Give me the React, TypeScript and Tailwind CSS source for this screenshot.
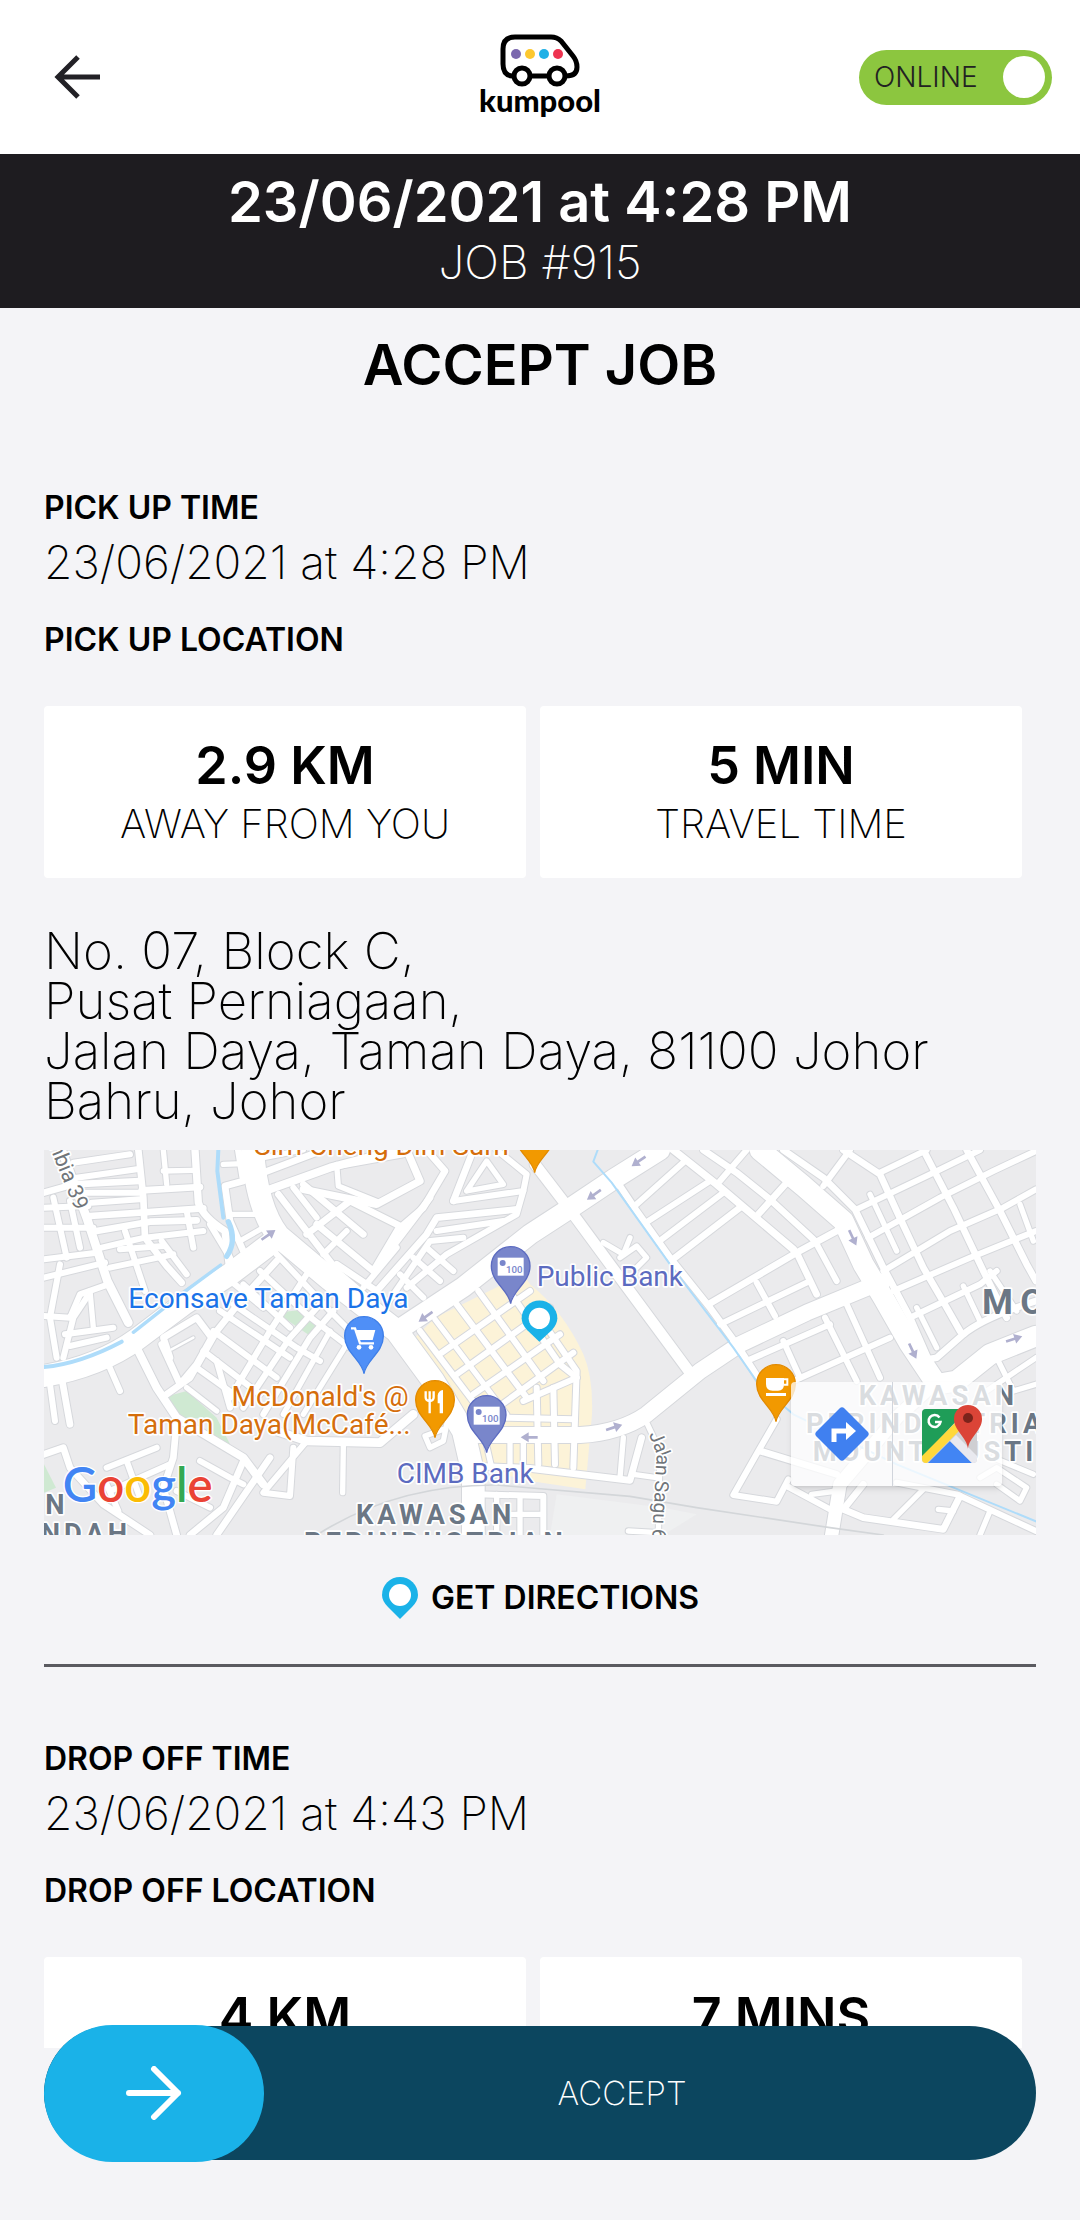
import React, { useState } from "react";

type Road = [width: number, path: string];

const WATER: Road[] = [
  [12, "M42 708Q150 698 275 632"],
  [10, "M310 604L480 470L572 402"],
  [12, "M565 57L562 120Q572 200 580 260"],
  [16, "M595 272Q622 330 590 376"],
  [6, "M1703 57L1690 92L1745 155L1920 400L2110 650L2190 765L2290 850L2600 1000L3020 1172"],
];

const ROADS: Road[] = [
  // north-west grid
  [26, "M95 57L170 260L232 450L295 575"],
  [20, "M325 57L340 200L345 320L410 405L455 455"],
  [16, "M400 57L410 160"],
  [22, "M495 57L505 215Q520 260 585 300L600 420"],
  [16, "M400 120L490 118"],
  [18, "M130 95L300 70"],
  [18, "M140 140L320 115"],
  [20, "M42 185L130 160L330 150"],
  [20, "M335 178L510 168"],
  [18, "M165 185L330 185"],
  [20, "M180 255L520 232"],
  [18, "M185 215L330 205"],
  [20, "M200 300L360 272L500 268"],
  [18, "M345 320L520 300"],
  [18, "M215 350L300 330L345 320"],
  [18, "M270 355L400 345"],
  [18, "M285 300L345 480"],
  [18, "M240 410L430 370"],
  [18, "M470 240L490 350"],
  [18, "M395 330L470 430"],
  [18, "M540 280L600 380"],
  [20, "M625 57L640 150L585 165L600 270L640 360"],
  [16, "M580 100L640 98"],
  [16, "M600 250L690 250"],
  [16, "M630 330L700 290"],
  [18, "M42 230L175 225"],
  [18, "M42 290L190 290"],
  [18, "M70 200L110 380"],
  [18, "M120 210L150 350"],
  [18, "M42 385L200 365"],
  [18, "M42 440L225 395"],
  [18, "M90 400L60 560L80 680"],
  [18, "M42 555L120 560L150 490L235 460"],
  [18, "M100 680L130 560L170 500"],
  [18, "M105 610L250 590"],
  [18, "M120 645L230 620"],
  [16, "M180 480L190 590"],
  // south of the canal
  [24, "M320 650L380 770L440 860L640 980L700 1060"],
  [20, "M395 640L450 760L500 700L545 620L500 560L400 620L420 680"],
  [8, "M425 655L490 620"],
  [18, "M235 700L270 780"],
  [18, "M60 760L75 870"],
  [20, "M95 740L120 880"],
  [20, "M410 790L480 740L560 600L640 500L740 390"],
  [18, "M500 710L640 810"],
  [18, "M520 660L690 790"],
  [18, "M550 600L740 740"],
  [18, "M570 540L780 680"],
  [18, "M610 520L800 650L870 690"],
  [18, "M560 690L600 830"],
  [18, "M600 800L720 600L830 430"],
  [18, "M640 830L780 620L870 520"],
  [18, "M700 850L840 620L910 540"],
  [16, "M760 850L900 600"],
  [16, "M820 850L950 640"],
  [18, "M640 460L780 590"],
  [18, "M690 420L830 550L960 650"],
  [18, "M740 370L900 540L960 600"],
  [18, "M590 440L700 530"],
  [16, "M470 770L560 840"],
  [26, "M740 900L830 930L1050 935L1150 850"],
  [18, "M830 930L700 1085L780 1095L790 950"],
  [16, "M940 945L938 1085"],
  [20, "M640 990L580 1130L480 1212"],
  [20, "M720 980L560 1212"],
  [20, "M440 870L430 980L400 1070L440 1212"],
  [18, "M230 1010L380 950"],
  [18, "M240 1080L420 1000"],
  [18, "M290 990L330 1100"],
  [18, "M230 1060L265 1140"],
  [18, "M510 990L600 1040L640 1060"],
  [18, "M440 1080L540 1130"],
  [20, "M42 970L100 950L120 1010L220 1120L360 1212"],
  [16, "M1250 880L1240 930L1200 950L1185 915L1240 895"],
  // north centre
  [20, "M700 125L880 57"],
  [24, "M720 175L900 110L1100 57"],
  [16, "M700 80L820 57"],
  [20, "M745 190L930 430L1060 540"],
  [18, "M790 170L860 260"],
  [20, "M820 160L1000 310"],
  [22, "M820 175L1040 220L1170 150L1130 57"],
  [16, "M920 100L925 165L1050 215"],
  [18, "M900 110L1120 70"],
  [20, "M830 310L960 210L1110 285L1030 420L860 280"],
  [20, "M1190 57L1245 120L1180 230L1110 290"],
  [20, "M1040 410L1200 200"],
  [20, "M920 400L1040 480L1190 310L1220 260L1460 235"],
  [18, "M880 370L950 300"],
  [18, "M1000 470L1100 350"],
  [18, "M1070 520L1200 330L1300 320"],
  [20, "M1270 210L1330 57"],
  [18, "M1270 210L1480 180L1490 130L1400 57"],
  [16, "M1310 180L1370 90L1420 160L1310 180"],
  [18, "M1220 300L1420 270"],
  [18, "M1130 470L1250 370L1460 250L1480 180"],
  [18, "M1150 380L1230 450"],
  [18, "M1190 350L1270 420"],
  [18, "M1110 430L1180 500"],
  // shop blocks
  [18, "M1170 600L1400 905"],
  [16, "M1215 565L1430 850"],
  [18, "M1280 520L1490 800"],
  [18, "M1345 480L1540 750"],
  [18, "M1410 440L1590 700L1640 740"],
  [18, "M1235 665L1500 480"],
  [18, "M1280 730L1560 530"],
  [18, "M1330 790L1590 610"],
  [18, "M1375 850L1630 665"],
  [18, "M1480 810L1640 740"],
  [18, "M1530 560L1640 720L1630 1010"],
  [18, "M1420 860L1630 865"],
  [18, "M1520 770L1525 1000"],
  [18, "M1570 770L1575 1000"],
  [16, "M1360 900L1385 1010"],
  [16, "M1440 930L1440 1010"],
  [16, "M1480 930L1480 1010"],
  [20, "M1330 1005L1500 1012L1800 1048L1835 920"],
  [16, "M1780 920L1770 1040"],
  [16, "M1810 1030L1880 1040"],
  [18, "M1340 1090L1540 1095L1540 1212"],
  [16, "M1400 1090L1400 1212"],
  [16, "M1470 1095L1470 1212"],
  [16, "M1400 1150L1540 1150"],
  // centre and east
  [32, "M1515 100L1615 230L1740 400L1980 725"],
  [20, "M1770 165L1820 240L1920 380L2040 530L2120 640L2200 765"],
  [16, "M1720 335L1780 370L1800 320"],
  [16, "M1770 380L1820 345L1850 380L1820 410"],
  [18, "M1820 220L1965 90"],
  [18, "M1855 270L2040 150"],
  [18, "M1895 325L2080 185"],
  [20, "M1935 380L2130 230"],
  [22, "M1930 57L2060 160L2290 355"],
  [20, "M2020 57L2120 125L2220 205L2350 325"],
  [18, "M2070 150L2150 57"],
  [20, "M2185 250L2270 155"],
  [20, "M2035 520L2300 365L2420 300"],
  [18, "M2070 580L2330 455"],
  [18, "M2180 455L2235 555"],
  [20, "M2300 365L2360 490"],
  [18, "M2355 330L2420 450"],
  [18, "M2380 165L2460 57"],
  [20, "M2260 57L2380 140L2475 235L2560 410L2640 560L2695 685L2720 680L2800 610Q2860 560 3018 510"],
  [20, "M2440 57L2550 130L2600 240L2680 410L2750 530L2790 600"],
  [18, "M2550 125L2690 57"],
  [18, "M2480 235L2700 130L2850 57"],
  [18, "M2515 320L2730 200L2890 120L3018 60"],
  [18, "M2560 420L2760 300L2920 230L3018 175"],
  [18, "M2590 480L2820 380L3018 300"],
  [18, "M2640 560L2850 460L2900 420"],
  [20, "M2680 57L2770 230L2860 420L2930 560"],
  [20, "M2810 57L2910 240L2990 400L3018 450"],
  [16, "M2520 190L2600 360"],
  [16, "M2970 220L3010 330"],
  [16, "M2800 465L2850 570"],
  [16, "M2660 530L2720 650"],
  [16, "M2880 420L2960 540"],
  [18, "M2385 560L2480 750"],
  [18, "M2450 520L2550 740"],
  [18, "M2150 690L2400 580"],
  [18, "M2290 750L2580 620"],
  [18, "M2260 630L2310 740"],
  [16, "M2900 680L2950 780L3018 760"],
  [16, "M2840 800L3018 680"],
  // south-east
  [18, "M2240 865L2185 960L2110 1092L2240 1112L2275 1045"],
  [20, "M2190 960L2420 1030"],
  [18, "M2270 1065L2400 1135"],
  [16, "M2345 1090L2420 1080"],
  [20, "M2500 1060L2440 1135L2500 1160L2740 1195L2790 1095"],
  [16, "M2590 1165L2680 1075"],
  [16, "M2725 1135L2770 1140"],
  [18, "M2600 1055L2780 1090L3018 1200"],
  [16, "M2850 1212L2880 1140"],
  [16, "M2900 1060L2970 1110L2990 1070L2900 1010L2850 1040"],
  [16, "M2890 980L3010 1030"],
  [16, "M1850 875L1890 960L1885 1212"],
  [16, "M1885 1205L1795 1200"],
  // arterials
  [40, "M2720 750L2600 860L2430 1060L2405 1212"],
  [66, "M42 735Q210 705 320 625L460 520L600 430L745 320"],
  [68, "M668 57Q680 230 745 315L900 445L1100 600L1210 750L1300 900L1330 1030L1330 1212"],
  [60, "M1100 600L1300 468L1500 310L1620 232L1750 145L1890 57"],
  [48, "M1330 912L1650 912Q1770 905 1850 850L2010 720L2130 640L2330 545L2560 450"],
  [62, "M2190 57L2320 165L2440 270L2500 400L2560 500L2640 640L2720 760L2780 750L2880 670L3018 615"],
];

const ARROWS = [
  [715, 312, -35],
  [1187, 557, 145],
  [1498, 919, 180],
  [1826, 91, 145],
  [1692, 191, 145],
  [1752, 889, -18],
  [2468, 320, 65],
  [2648, 660, 65],
  [2952, 624, -18],
];

function MapPin({ x, y, fill, edge, children }: { x: number; y: number; fill: string; edge: string; children?: React.ReactNode }) {
  return (
    <g transform={`translate(${x} ${y})`}>
      <path
        d="M0 113C-6 72-58 50-58 0A58 58 0 1 1 58 0C58 50 6 72 0 113Z"
        fill={fill}
        stroke={edge}
        strokeWidth={4}
      />
      {children}
    </g>
  );
}

function BankNote() {
  return (
    <>
      <rect x={-39} y={-25} width={78} height={54} fill="#fff" />
      <circle cx={-24} cy={-9} r={9} fill="#7986cb" />
      <text x={-14} y={20} fontSize={29} fontWeight={500} fill="#7986cb">100</text>
    </>
  );
}

function CityMap() {
  const halo = { stroke: "#fff", strokeWidth: 10, strokeLinejoin: "round" as const, paintOrder: "stroke" };
  return (
    <svg
      viewBox="42 57 2976 1155"
      preserveAspectRatio="xMidYMid slice"
      className="block h-full w-full"
      fontFamily="Roboto, sans-serif"
      role="img"
      aria-label="Map of the pick up location"
    >
      <rect x={42} y={57} width={2976} height={1155} fill="#ebebed" />
      <path d="M1580 1090L1900 1130L2000 1150L1900 1212H1560Z" fill="#eff0f1" />
      <path d="M1150 625L1215 560L1480 430L1500 460Q1600 540 1660 670Q1690 740 1686 850L1666 1075L1500 1050L1340 1010V900L1280 800Z" fill="#fcf3d8" />
      <path d="M740 545L830 535L866 580L842 616Z" fill="#cfe9d2" />
      <path d="M415 795L470 780L560 860L600 940L530 915L535 862L445 862Z" fill="#cfe9d2" />
      <path d="M42 1000L78 1070L42 1085Z" fill="#cfe9d2" />
      <g fill="none" strokeLinecap="round" strokeLinejoin="round">
        {ROADS.map(([w, d]) => <path key={d} d={d} stroke="#d6d8dc" strokeWidth={w + 6} />)}
        {ROADS.map(([w, d]) => <path key={d} d={d} stroke="#fff" strokeWidth={w} />)}
        {WATER.map(([w, d]) => <path key={d} d={d} stroke="#aedcfa" strokeWidth={w} />)}
        <path d="M860 1212Q1100 1060 1400 1062L1800 1096L2000 1130L2400 1190L2560 1212" stroke="#d3d6d9" strokeWidth={5} />
      </g>
      {ARROWS.map(([x, y, r]) => (
        <g key={`${x}-${y}`} transform={`translate(${x} ${y}) rotate(${r})`} fill="#b0b0cf">
          <path d="M-25-4H2V-15L26 0L2 15V4H-25Z" />
        </g>
      ))}

      <MapPin x={1514} y={12} fill="#f29900" edge="#e28a00" />
      <MapPin x={1442} y={405} fill="#7986cb" edge="#5c6bc0"><BankNote /></MapPin>
      <MapPin x={1370} y={852} fill="#7986cb" edge="#5c6bc0"><BankNote /></MapPin>
      <MapPin x={1002} y={615} fill="#4f8ff7" edge="#3f7fe8">
        <path d="M-39-23H-27L-12 22H30" fill="none" stroke="#fff" strokeWidth={7} />
        <path d="M-24-18H34L26 12H-14Z" fill="#fff" />
        <circle cx={-15} cy={34} r={7} fill="#fff" />
        <circle cx={21} cy={34} r={7} fill="#fff" />
      </MapPin>
      <MapPin x={1215} y={807} fill="#f29900" edge="#e28a00">
        <path d="M-28-26V-8Q-28 3-16 3Q-4 3-4-8V-26M-16-26V40" fill="none" stroke="#fff" strokeWidth={7} />
        <path d="M24-30V40H14V10H8V-14Q10-28 24-30Z" fill="#fff" />
      </MapPin>
      <MapPin x={2238} y={759} fill="#f29900" edge="#e28a00">
        <path d="M-30-18H24V0Q24 20 6 20H-10Q-30 20-30 0Z" fill="#fff" />
        <path d="M22-14H34V2H22" fill="none" stroke="#fff" strokeWidth={6} />
        <rect x={-30} y={27} width={60} height={9} fill="#fff" />
      </MapPin>
      <path d="M1528 632L1492 598Q1475 580 1475 562A53 53 0 1 1 1582 562Q1582 580 1565 598Z" fill="#1ab2e8" />
      <circle cx={1528} cy={562} r={32} fill="#fff" />

      <g {...halo} fontSize={84}>
        <text x={672} y={72} fill="#d56e0c">Sim Cheng Dim Sum</text>
        <text x={295} y={530} fill="#1a73e8">Econsave Taman Daya</text>
        <text x={1136} y={824} fill="#d56e0c" textAnchor="end">McDonald's @</text>
        <text x={1142} y={908} fill="#d56e0c" textAnchor="end">Taman Daya(McCafé...</text>
        <text x={1520} y={464} fill="#5c6bc0">Public Bank</text>
        <text x={1100} y={1055} fill="#5c6bc0">CIMB Bank</text>
      </g>
      <g {...halo} fontSize={58} fill="#70757a">
        <text transform="translate(58 46) rotate(68)" fontSize={64}>nbia 39</text>
        <text transform="translate(1856 910) rotate(68)">Jal</text>
        <text transform="translate(1880 970) rotate(93)">an Sagu 6</text>
      </g>
      <g {...halo} fontSize={82} fontWeight={700} letterSpacing={12} fill="#6b7785">
        <text x={978} y={1180}>KAWASAN</text>
        <text x={822} y={1264}>PERINDUSTRIAN</text>
        <text x={46} y={1150}>N</text>
        <text x={32} y={1236}>NDAH</text>
        <text x={2486} y={822}>KAWASAN</text>
        <text x={2328} y={906}>PERINDUSTRIAL</text>
        <text x={2348} y={991}>MOUNT AUSTIN</text>
        <text x={2856} y={549} fontSize={106} letterSpacing={22}>MO</text>
      </g>
      <text x={98} y={1112} fontFamily="Lato, sans-serif" fontSize={142} fontWeight={600} stroke="#fff" strokeWidth={8} paintOrder="stroke">
        <tspan fill="#4285f4">G</tspan>
        <tspan fill="#ea4335">o</tspan>
        <tspan fill="#fbbc05">o</tspan>
        <tspan fill="#4285f4">g</tspan>
        <tspan fill="#34a853">l</tspan>
        <tspan fill="#ea4335">e</tspan>
      </text>
    </svg>
  );
}

function DirectionsIcon() {
  return (
    <svg viewBox="0 0 54 54" className="size-[54px]" aria-hidden="true">
      <path d="M24.5 1.5Q27-1 29.5 1.5L52.500 24.500Q55 27 52.500 29.500L29.500 52.500Q27 55 24.500 52.500L1.500 29.500Q-1 27 1.500 24.500Z" fill="#4080f0" />
      <path d="M19 35V24H33" fill="none" stroke="#fff" strokeWidth={5} />
      <path d="M31 15L41 24L31 33Z" fill="#fff" />
    </svg>
  );
}

function MapsIcon() {
  return (
    <svg viewBox="0 0 60 60" className="size-[60px]" aria-hidden="true">
      <defs>
        <clipPath id="tile"><rect x={0} y={5} width={55} height={54} rx={4} /></clipPath>
      </defs>
      <g clipPath="url(#tile)">
        <rect width={60} height={60} fill="#cfcfd2" />
        <path d="M0 0H50L0 54Z" fill="#1f9d58" />
        <path d="M0 60V52L36 16L42 22L4 60Z" fill="#ffd83b" />
        <path d="M5 60L28 37L51 60Z" fill="#4285f4" />
        <path d="M28 37L34 31L60 57V60H51Z" fill="#e9e9ef" />
      </g>
      <path d="M17.500 13.500A6 6 0 1 0 18.500 18H13" fill="none" stroke="#fff" strokeWidth={2.500} />
      <path d="M46 45C45 33 32 27 32 15A14 14 0 1 1 60 15C60 27 47 33 46 45Z" fill="#db4437" />
      <circle cx={46} cy={14} r={5} fill="#7b231b" />
    </svg>
  );
}

function Logo() {
  return (
    <div className="flex flex-col items-center pb-1">
      <svg viewBox="0 0 80 54" className="h-[54px] w-20" aria-hidden="true">
        <path d="M12 42Q3 41 3 30V15Q3 3 15 3H51Q57 3 61 7L73 22Q77 27 77 33Q77 42 66 42Z" fill="#fff" stroke="#000" strokeWidth={5} />
        <circle cx={16} cy={20} r={5} fill="#7b68ae" />
        <circle cx={30} cy={20} r={5} fill="#fdc82f" />
        <circle cx={44} cy={20} r={5} fill="#1fb0e6" />
        <circle cx={58} cy={20} r={5} fill="#ee3350" />
        <circle cx={22} cy={42} r={8} fill="#fff" stroke="#000" strokeWidth={5} />
        <circle cx={57} cy={42} r={8} fill="#fff" stroke="#000" strokeWidth={5} />
      </svg>
      <span className="-mt-1 font-[Lato,sans-serif] text-[31px] leading-8 font-black text-black">kumpool</span>
    </div>
  );
}

function StatCard({ value, label }: { value: string; label: string }) {
  return (
    <div className="flex-1 rounded-sm bg-white pt-7 pb-7 text-center">
      <p className="text-[52px] leading-[64px] font-semibold">{value}</p>
      <p className="text-[40px] leading-[52px] font-extralight">{label}</p>
    </div>
  );
}

type StopProps = { kind: string; time: string; stats: [string, string][] };

function Stop({ kind, time, stats }: StopProps) {
  return (
    <>
      <h2 className="text-[32px] leading-10 font-semibold">{kind} TIME</h2>
      <p className="mt-2 text-[46px] leading-[52px] font-extralight">{time}</p>
      <h2 className="mt-8 text-[32px] leading-10 font-semibold">{kind} LOCATION</h2>
      <div className="mt-[46px] mr-[14px] flex gap-[14px]">
        {stats.map(([value, label]) => <StatCard key={label} value={value} label={label} />)}
      </div>
    </>
  );
}

export default function App() {
  const [online, setOnline] = useState(true);
  return (
    <div className="flex h-screen flex-col bg-[#f4f4f7] font-[Inter,sans-serif] text-black">
      <header className="grid h-[154px] shrink-0 grid-cols-[1fr_auto_1fr] items-center bg-white px-7">
        <button type="button" aria-label="Back" className="ml-[26px] justify-self-start">
          <svg viewBox="0 0 46 44" className="h-11 w-[46px]" fill="none" stroke="#222126" strokeWidth={5} aria-hidden="true">
            <path d="M24 2L4 22L24 42M4 22H46" />
          </svg>
        </button>
        <Logo />
        <label className="flex h-[55px] w-[193px] cursor-pointer items-center justify-between justify-self-end rounded-full bg-[#8cc63f] pr-[7px] pl-[15px]">
          <input type="checkbox" role="switch" className="sr-only" checked={online} onChange={(e) => setOnline(e.target.checked)} />
          <span className="text-[28px] leading-8 font-light text-[#222]">ONLINE</span>
          <span className="size-[42px] rounded-full bg-white" />
        </label>
      </header>

      <section className="shrink-0 bg-[#1e1c20] pt-4 pb-[18px] text-center text-white">
        <p className="text-[56px] leading-[64px] font-semibold">23/06/2021 at 4:28 PM</p>
        <p className="text-[46px] leading-[56px] font-extralight">JOB #915</p>
      </section>

      <main className="min-h-0 flex-1 overflow-y-auto px-11 pt-[25px] [scrollbar-width:none]">
        <h1 className="mb-[91px] text-center text-[56px] leading-[64px] font-semibold">ACCEPT JOB</h1>

        <Stop
          kind="PICK UP"
          time="23/06/2021 at 4:28 PM"
          stats={[["2.9 KM", "AWAY FROM YOU"], ["5 MIN", "TRAVEL TIME"]]}
        />

        <address className="mt-12 text-[51px] leading-[50px] font-extralight not-italic">
          No. 07, Block C,<br />
          Pusat Perniagaan,<br />
          Jalan Daya, Taman Daya, 81100 Johor<br />
          Bahru, Johor
        </address>

        <div className="relative mt-6 h-[385px] overflow-hidden">
          <CityMap />
          <div className="absolute right-[34px] bottom-[49px] flex h-[104px] w-[211px] divide-x divide-gray-300 rounded-sm bg-white/75 shadow-md">
            <button type="button" aria-label="Directions" className="flex flex-1 items-center justify-center"><DirectionsIcon /></button>
            <button type="button" aria-label="Open in Maps" className="flex flex-1 items-center justify-center pl-2"><MapsIcon /></button>
          </div>
        </div>

        <button type="button" className="mx-auto mt-[42px] flex items-center gap-3 text-[32px] leading-[42px] font-semibold">
          <svg viewBox="0 0 38 42" className="h-[42px] w-[38px]" aria-hidden="true">
            <path d="M19 42L7 30Q1 24 1 18A18 18 0 0 1 37 18Q37 24 31 30Z" fill="#1ab2e8" />
            <circle cx={19} cy={18} r={11} fill="#fff" />
          </svg>
          GET DIRECTIONS
        </button>

        <hr className="mt-[45px] mb-[72px] border-0 border-t-3 border-[#5a5a60]" />

        <Stop
          kind="DROP OFF"
          time="23/06/2021 at 4:43 PM"
          stats={[["4 KM", "TRIP DISTANCE"], ["7 MINS", "TRAVEL TIME"]]}
        />
      </main>

      <footer className="relative -mt-[22px] shrink-0 px-11 pb-[60px]">
        <button type="button" className="flex h-[134px] w-full items-center rounded-full bg-[#0c465f]">
          <span className="flex h-[137px] w-[220px] shrink-0 items-center justify-center rounded-full bg-[#1ab2e8]">
            <svg viewBox="0 0 56 54" className="h-[54px] w-14" fill="none" stroke="#fff" strokeWidth={6} strokeLinecap="round" strokeLinejoin="round" aria-hidden="true">
              <path d="M3 27H52M28 3L52 27L28 51" />
            </svg>
          </span>
          <span className="flex-1 pr-[56px] text-center text-[33px] leading-10 font-extralight text-white">ACCEPT</span>
        </button>
      </footer>
    </div>
  );
}
